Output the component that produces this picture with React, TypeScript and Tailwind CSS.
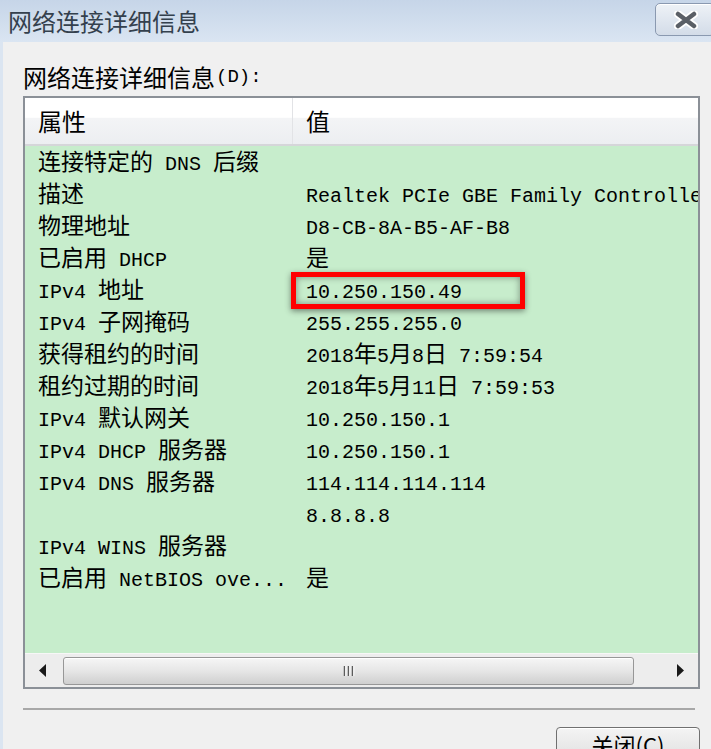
import React from "react";

const CJK = /([\u3000-\u9fff\uff00-\uffef]+)/;

function Mixed({ text }: { text: string }) {
  const parts = text.split(CJK).filter((p) => p.length > 0);
  return (
    <>
      {parts.map((p, i) =>
        /[\u3000-\u9fff\uff00-\uffef]/.test(p) ? (
          <span key={i} className="text-[23px]">
            {p}
          </span>
        ) : (
          <span key={i} className="text-[20px]">
            {p}
          </span>
        )
      )}
    </>
  );
}

const rows: [string, string][] = [
  ["连接特定的 DNS 后缀", ""],
  ["描述", "Realtek PCIe GBE Family Controller"],
  ["物理地址", "D8-CB-8A-B5-AF-B8"],
  ["已启用 DHCP", "是"],
  ["IPv4 地址", "10.250.150.49"],
  ["IPv4 子网掩码", "255.255.255.0"],
  ["获得租约的时间", "2018年5月8日 7:59:54"],
  ["租约过期的时间", "2018年5月11日 7:59:53"],
  ["IPv4 默认网关", "10.250.150.1"],
  ["IPv4 DHCP 服务器", "10.250.150.1"],
  ["IPv4 DNS 服务器", "114.114.114.114"],
  ["", "8.8.8.8"],
  ["IPv4 WINS 服务器", ""],
  ["已启用 NetBIOS ove...", "是"],
];

export default function App() {
  return (
    <div className="w-[711px] h-[749px] overflow-hidden bg-[#f0f0f0] flex flex-col font-['Liberation_Mono','Noto_Sans_CJK_SC',monospace] text-black">
      {/* Title bar */}
      <div className="h-[42px] shrink-0 flex items-center pl-[8px] bg-gradient-to-b from-[#c6d5e8] to-[#dae5f2]">
        <span className="text-[24px] leading-none text-[#34404d] font-['Noto_Sans_CJK_SC',sans-serif]">
          网络连接详细信息
        </span>
        <div className="ml-auto mr-[-4px] mt-[-3px] w-[60px] h-[33px] shrink-0 rounded-[5px] border border-[#8a99b0] bg-gradient-to-b from-[#eef2f7] to-[#d3dce8] shadow-[inset_0_1px_0_#ffffff] flex items-center pl-[18px]">
          <svg width="24" height="18" viewBox="0 0 24 18">
            <path d="M4 3 L20 15 M20 3 L4 15" stroke="#ffffff" strokeWidth="8" strokeLinecap="round" />
            <path d="M4 3 L20 15 M20 3 L4 15" stroke="#5a5f66" strokeWidth="4.5" strokeLinecap="round" />
          </svg>
        </div>
      </div>

      {/* Body */}
      <div className="flex-1 flex flex-col border-l-[3px] border-[#dbe5f1] pl-[20px]">
        <div className="pt-[23px] h-[47px] leading-[24px] flex items-center whitespace-nowrap">
          <span className="text-[24px] font-['Noto_Sans_CJK_SC',sans-serif]">网络连接详细信息</span>
          <span className="text-[19px] ml-[1px]">(D):</span>
        </div>

        {/* List box */}
        <div className="mt-[7px] w-[677px] h-[593px] border-2 border-[#8b9097] flex flex-col relative bg-[#c7edcc]">
          {/* Header */}
          <div className="h-[48px] shrink-0 flex border-b-2 border-[#d5d6d9] bg-[linear-gradient(to_bottom,#ffffff_0%,#ffffff_42%,#f3f4f6_44%,#eceef1_100%)]">
            <div className="w-[268px] pl-[13px] flex items-center border-r border-[#e2e3e6] text-[24px] font-['Noto_Sans_CJK_SC',sans-serif]">
              属性
            </div>
            <div className="pl-[13px] flex items-center text-[24px] font-['Noto_Sans_CJK_SC',sans-serif]">
              值
            </div>
          </div>

          {/* Rows */}
          <div className="flex-1 flex flex-col overflow-hidden pt-[3px]">
            {rows.map(([k, v], i) => (
              <div key={i} className="h-[32px] shrink-0 flex items-center leading-[32px] whitespace-nowrap">
                <div className="w-[281px] shrink-0 pl-[13px] overflow-hidden">
                  <Mixed text={k} />
                </div>
                <div className="flex-1 overflow-hidden">
                  <Mixed text={v} />
                </div>
              </div>
            ))}
          </div>

          {/* Horizontal scrollbar */}
          <div className="h-[34px] shrink-0 flex items-center bg-[#ededed] border-t border-[#f7f7f7]">
            <div className="w-[36px] h-full flex items-center justify-center">
              <svg width="8" height="13" viewBox="0 0 8 13">
                <path d="M7 0 L0 6.5 L7 13 Z" fill="#1a1a1a" />
              </svg>
            </div>
            <div className="flex-1 h-full flex items-center pl-[2px]">
              <div className="w-[571px] h-[28px] rounded-[3px] border border-[#979797] bg-gradient-to-b from-[#f6f6f6] via-[#e6e6e6] to-[#cfcfcf] flex items-center justify-center shadow-[inset_0_1px_0_#ffffff]">
                <svg width="12" height="12" viewBox="0 0 12 12">
                  <path d="M1.5 1 V11 M5.5 1 V11 M9.5 1 V11" stroke="#5c5c5c" strokeWidth="1.5" />
                  <path d="M2.8 1 V11 M6.8 1 V11 M10.8 1 V11" stroke="#ffffff" strokeWidth="1" />
                </svg>
              </div>
            </div>
            <div className="w-[36px] h-full flex items-center justify-center">
              <svg width="8" height="13" viewBox="0 0 8 13">
                <path d="M1 0 L8 6.5 L1 13 Z" fill="#1a1a1a" />
              </svg>
            </div>
          </div>

          {/* Red highlight box */}
          <div className="absolute left-[266px] top-[174px] w-[234px] h-[37px] border-[5px] border-[#ff0000] shadow-[0_2px_6px_rgba(0,0,0,0.45),inset_0_0_7px_rgba(0,0,0,0.4)]" />
        </div>

        {/* Separator */}
        <div className="mt-[19px] w-[672px] h-[2px] bg-[#a8a8a8]" />

        {/* Close button */}
        <div className="mt-[17px] ml-[533px] w-[144px] h-[40px] rounded-[4px] border border-[#707070] bg-gradient-to-b from-[#f4f4f4] to-[#dcdcdc] shadow-[inset_0_1px_0_#ffffff] flex justify-center pt-[3px]">
          <span className="text-[22px] leading-[26px] font-['Noto_Sans_CJK_SC',sans-serif]">关闭(C)</span>
        </div>
      </div>
    </div>
  );
}
